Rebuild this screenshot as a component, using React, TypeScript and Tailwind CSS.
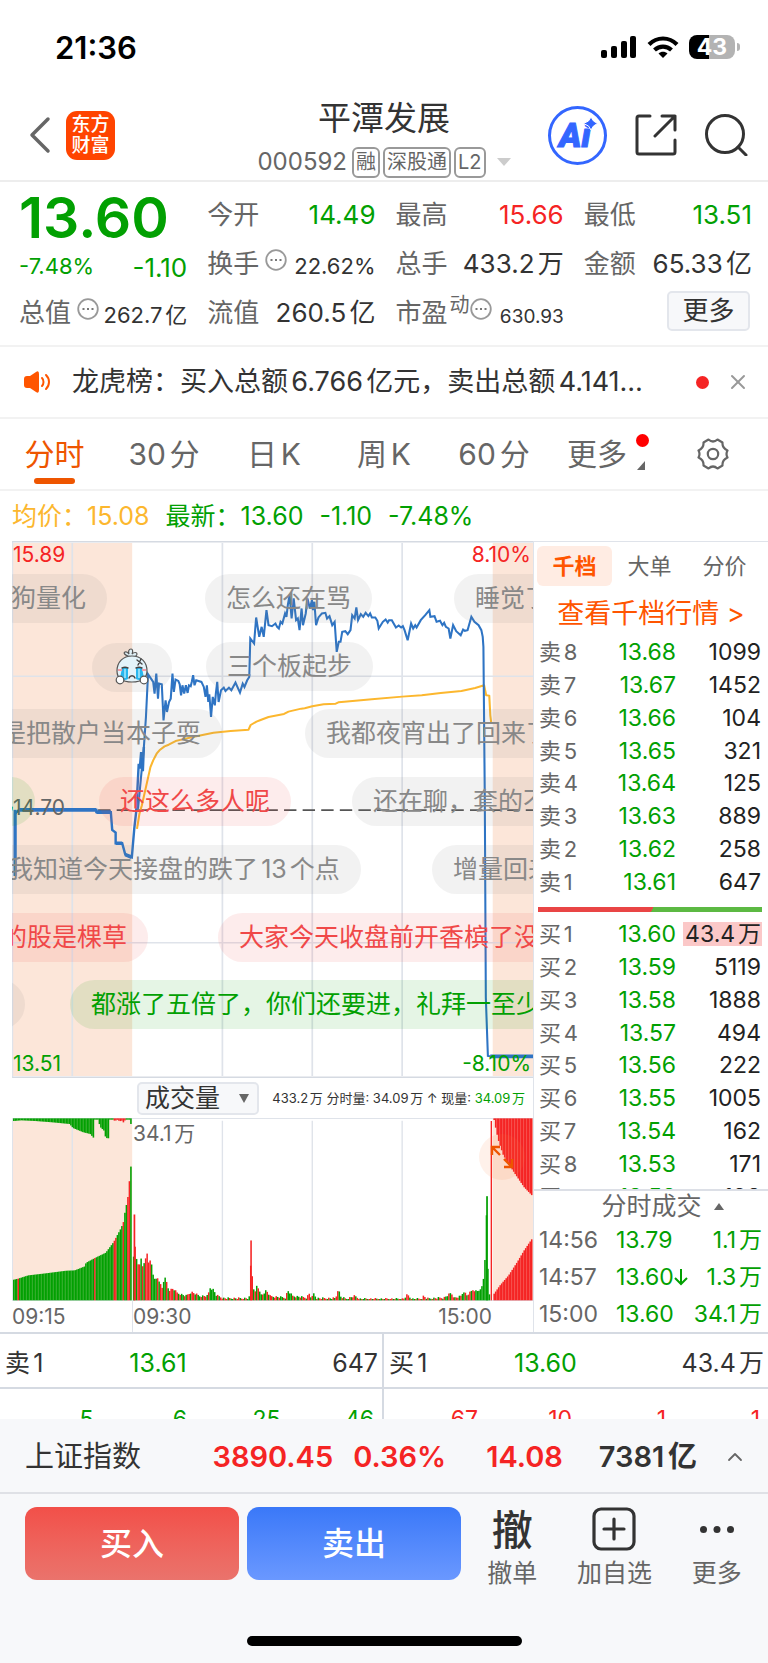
import type { ReactNode } from 'react'
import { ChevronUp, X } from 'lucide-react'
import clsx from 'clsx'

type Level = { name: string; price: string; qty: string; hot?: boolean }

const SELLS: Level[] = [
  { name: '卖8', price: '13.68', qty: '1099' },
  { name: '卖7', price: '13.67', qty: '1452' },
  { name: '卖6', price: '13.66', qty: '104' },
  { name: '卖5', price: '13.65', qty: '321' },
  { name: '卖4', price: '13.64', qty: '125' },
  { name: '卖3', price: '13.63', qty: '889' },
  { name: '卖2', price: '13.62', qty: '258' },
  { name: '卖1', price: '13.61', qty: '647' },
]

const BUYS: Level[] = [
  { name: '买1', price: '13.60', qty: '43.4万', hot: true },
  { name: '买2', price: '13.59', qty: '5119' },
  { name: '买3', price: '13.58', qty: '1888' },
  { name: '买4', price: '13.57', qty: '494' },
  { name: '买5', price: '13.56', qty: '222' },
  { name: '买6', price: '13.55', qty: '1005' },
  { name: '买7', price: '13.54', qty: '162' },
  { name: '买8', price: '13.53', qty: '171' },
  { name: '买9', price: '13.52', qty: '198' },
]

const TRADES = [
  { time: '14:56', price: '13.79', qty: '1.1万' },
  { time: '14:57', price: '13.60', down: true, qty: '1.3万' },
  { time: '15:00', price: '13.60', qty: '34.1万' },
]

// bullet comments drifting over the chart, x is the pill's left edge
const COMMENTS = [
  { row: 0, x: -22, text: '狗量化', tone: 'gray' },
  { row: 0, x: 193, text: '怎么还在骂', tone: 'gray' },
  { row: 0, x: 442, text: '睡觉了', tone: 'gray' },
  { row: 1, x: 194, text: '三个板起步', tone: 'gray' },
  { row: 2, x: -32, text: '是把散户当本子耍', tone: 'gray' },
  { row: 2, x: 293, text: '我都夜宵出了回来了', tone: 'gray' },
  { row: 3, x: -94, text: '明天见', tone: 'green' },
  { row: 3, x: 87, text: '还这么多人呢', tone: 'red' },
  { row: 3, x: 340, text: '还在聊，套的不多', tone: 'gray' },
  { row: 4, x: -25, text: '我知道今天接盘的跌了13个点', tone: 'gray' },
  { row: 4, x: 420, text: '增量回来', tone: 'gray' },
  { row: 5, x: -31, text: '的股是棵草', tone: 'red' },
  { row: 5, x: 206, text: '大家今天收盘前开香槟了没', tone: 'red' },
  { row: 6, x: -104, text: '睡觉了', tone: 'gray' },
  { row: 6, x: 58, text: '都涨了五倍了，你们还要进，礼拜一至少', tone: 'green' },
]

const PRICE_LINE =
  'M401 835 418 650 424 560 430 432 445 455 449 490 454 430 459 505 462 460 470 462 475 570 481 510 485 545 491 515 496 505 501 430 505 485 510 448 518 452 522 462 526 495 530 465 535 490 540 465 545 488 549 465 554 468 557 455 561 435 565 465 570 450 585 455 592 470 597 500 601 465 605 515 608 492 613 560 618 500 624 525 627 490 631 455 635 515 642 480 650 472 655 482 665 472 672 480 684 457 697 487 705 460 710 470 718 450 724 440 727 325 738 340 744 262 753 320 760 290 766 320 774 240 780 285 790 288 800 280 805 290 810 295 815 275 820 280 828 250 832 260 836 225 841 195 847 265 853 205 860 270 865 265 870 300 876 235 880 285 888 250 893 205 900 235 906 210 909 240 913 215 918 285 925 262 935 250 945 248 950 265 957 258 965 285 972 275 978 365 984 335 989 335 994 305 1003 303 1010 312 1018 300 1023 255 1030 265 1035 232 1040 270 1048 252 1055 260 1062 248 1070 258 1075 250 1080 262 1090 262 1096 272 1100 295 1112 275 1120 268 1126 277 1130 270 1138 270 1150 292 1158 286 1165 292 1170 288 1175 300 1184 330 1194 280 1200 295 1206 285 1210 292 1222 270 1235 255 1247 240 1250 260 1262 258 1268 275 1278 272 1285 285 1290 278 1295 290 1303 295 1308 325 1316 285 1325 303 1338 315 1345 298 1350 302 1358 300 1369 260 1378 275 1390 285 1398 300 1402 320 1404 350 1408 800 1411 1400 1417 1575 1425 1576'

const AVG_LINE =
  'M398 895 405 850 412 825 424 770 437 710 445 690 455 670 465 658 478 648 490 643 510 632 530 627 560 620 620 607 670 602 722 598 728 584 745 574 757 569 780 560 825 551 838 544 850 541 875 535 885 534 907 528 940 522 975 520 983 516 1000 514 1080 507 1168 499 1225 495 1280 488 1340 482 1380 473 1406 465 1412 495 1421 496 1424 555 1427 580'

const RED = '#f52424'
const GREEN = '#02a002'

type Pt = [number, number]

function envelope(points: Pt[], x: number) {
  for (let i = 1; i < points.length; i++) {
    const [x0, y0] = points[i - 1]
    const [x1, y1] = points[i]
    if (x <= x1) return y0 + ((y1 - y0) * (x - x0)) / (x1 - x0)
  }
  return points[points.length - 1][1]
}

// auction volume before the open
const AUCTION: Pt[] = [[38, 628], [50, 625], [80, 615], [130, 609], [190, 601], [215, 600], [244, 588], [248, 577], [275, 562], [305, 547], [328, 515], [350, 472], [358, 450], [362, 415], [368, 392], [372, 355], [377, 288], [382, 288]]
const AUCTION_REST: Pt[] = [[38, 151], [60, 149], [100, 151], [150, 155], [200, 160], [210, 172], [240, 185], [260, 190], [270, 202], [272, 203], [273, 147], [284, 147], [288, 168], [300, 180], [305, 202], [313, 203], [314, 147], [328, 147], [331, 151], [340, 147], [345, 152], [352, 150], [357, 156], [362, 147], [374, 147], [376, 160], [382, 160]]
const CLOSE_TOP: Pt[] = [[1433, 148], [1440, 185], [1447, 215], [1460, 255], [1475, 280], [1495, 312], [1520, 350], [1545, 377]]
const CLOSE_BOTTOM: Pt[] = [[1433, 670], [1450, 645], [1475, 615], [1500, 575], [1520, 540], [1545, 502]]

const SESSION: Pt[] = [[387, 622], [390, 432], [393, 555], [400, 575], [404, 600], [408, 550], [413, 590], [420, 575], [427, 548], [433, 585], [438, 560], [443, 608], [450, 628], [457, 622], [465, 640], [472, 655], [478, 617], [484, 635], [490, 660], [503, 655], [515, 668], [540, 677], [556, 665], [580, 677], [604, 677], [609, 652], [620, 658], [628, 675], [650, 684], [722, 684], [727, 675], [729, 510], [733, 635], [740, 670], [747, 640], [753, 665], [760, 675], [773, 660], [785, 678], [830, 682], [835, 660], [850, 677], [890, 682], [898, 670], [905, 684], [912, 668], [918, 684], [975, 684], [982, 655], [990, 680], [1005, 686], [1030, 677], [1045, 686], [1172, 686], [1183, 673], [1195, 686], [1225, 686], [1230, 677], [1240, 685], [1290, 682], [1310, 668], [1320, 683], [1338, 678], [1347, 663], [1356, 675], [1374, 658], [1385, 663], [1398, 655], [1405, 620], [1410, 541], [1414, 377], [1418, 672]]

const GREEN_BARS = [0, 2, 5, 7, 12, 13, 14, 15, 17, 20, 21, 23, 51, 52, 53, 80, 84, 103, 104, 105, 137, 138]

function bars(from: number, to: number, step = 4.36) {
  const xs: number[] = []
  for (let x = from; x < to; x += step) xs.push(x)
  return xs
}

function VolumeChart() {
  return (
    <svg viewBox="35 142 1513 550" preserveAspectRatio="none" className="block h-[183px] w-full" aria-hidden="true">
      <rect x="38" y="142" width="346" height="550" fill="#fce6d9" />
      <rect x="1431" y="142" width="117" height="550" fill="#fce6d9" />
      <path d="M210 142V692M646 150V692M907 150V692M1168 150V692" stroke="#dfe3ea" strokeWidth="4" />
      <path d="M35 143.500H1548M35 690.500H1548M36.500 142V692" stroke="#dfe3ea" strokeWidth="3" />
      {bars(38, 380).map((x, i) => {
        const red = (x > 48 && x < 53) || (x > 270 && x < 275) || (x > 326 && x < 338) || (x > 352 && x < 357) || (x > 369 && x < 375)
        const topRed = x > 327 && x < 362
        return (
          <g key={i}>
            <rect x={x} y={envelope(AUCTION, x)} width="4.6" height={690 - envelope(AUCTION, x)} fill={red ? RED : GREEN} />
            <rect x={x} y="143" width="4.6" height={envelope(AUCTION_REST, x) - 143} fill={topRed ? RED : GREEN} />
          </g>
        )
      })}
      {bars(386, 1420).map((x, i) => {
        const base = envelope(SESSION, x + 2)
        const wobble = base > 640 && x < 1390 ? ((i * 37) % 7) - 3 : 0
        const y = Math.min(686, base + wobble)
        const green = x > 1372 ? x > 1376 : GREEN_BARS.includes(i) || (i > 24 && (i * 29) % 11 < 5 && i !== 79)
        return <rect key={i} x={x} y={y} width="4.4" height={690 - y} fill={green ? GREEN : RED} />
      })}
      <rect x="388" y="432" width="5" height="258" fill={RED} />
      <rect x="727" y="510" width="4.500" height="180" fill={RED} />
      <rect x="1412" y="377" width="5" height="313" fill={GREEN} />
      <rect x="1425" y="151" width="4" height="539" fill={RED} />
      {bars(1433, 1543).map((x, i) => (
        <g key={i} fill={RED}>
          <rect x={x} y="143" width="4.500" height={envelope(CLOSE_TOP, x) - 143} />
          <rect x={x} y={envelope(CLOSE_BOTTOM, x)} width="4.500" height={690 - envelope(CLOSE_BOTTOM, x)} />
        </g>
      ))}
    </svg>
  )
}

function PriceChart() {
  return (
    <svg viewBox="35 33 1513 1608" preserveAspectRatio="none" className="block h-[537px] w-full" aria-hidden="true">
      <rect x="38" y="39" width="346" height="1596" fill="#fce6d9" />
      <rect x="1431" y="39" width="117" height="1596" fill="#fce6d9" />
      <path d="M210 39V1635M646 39V1635M907 39V1635M1168 39V1635" stroke="#dfe3ea" strokeWidth="5" />
      <path d="M36 438H1548M36 1236H1548M36 33V1641" stroke="#dfe3ea" strokeWidth="5" />
      <path d="M36 35H1548M36 1639H1548" stroke="#d5dae2" strokeWidth="5" />
      <path d="M285 839H1548" stroke="#555" strokeWidth="5" strokeDasharray="36 18" />
      <path d={AVG_LINE} fill="none" stroke="#fcb72e" strokeWidth="6" strokeLinejoin="round" />
      <path d="M44 1036V850L55 838H280V845H322L326 898 336 906V938H355L364 972 383 980 390 895 396 840 403 700 406 715 410 665 415 722 418 650" fill="none" stroke="#2e74c4" strokeWidth="7" />
      <path d="M55 838H280M280 845H322M336 938H355M364 972 383 980M1424 1576H1548" fill="none" stroke="#2e74c4" strokeWidth="11" />
      <path d="M44 838V1036" stroke="#2e74c4" strokeWidth="9" />
      <path d={PRICE_LINE} fill="none" stroke="#2e74c4" strokeWidth="6" />
    </svg>
  )
}

function CryingFace() {
  return (
    <svg viewBox="0 0 34 38" className="h-[38px] w-[34px]" aria-label="大哭" role="img">
      <g stroke="#555" strokeWidth="1.200">
        <path d="M13 9c-3-1-5-3-3-4s3 1 4 2c-1-3 0-5 2-5s2 3 1 5c2-2 5-2 5 0s-3 3-5 3z" fill="#dff0f7" />
        <path d="M17 9C8 9 2 15 2 24c0 7 5 11 15 11s15-4 15-11C32 15 26 9 17 9z" fill="#e3f3fa" />
      </g>
      <path d="M7 21h6v11c-3 2-6 1-8-1zM21 21h6l2 10c-2 2-5 3-8 1z" fill="#29b6ee" />
      <path d="M9 22h2v9H9zM23 22h2v9h-2z" fill="#8adcf8" />
      <path d="M7 21c2-1 4-1 6 0M21 21c2-1 4-1 6 0M14 31c1-3 5-3 6 0M22 13l5 4M26 12l-3 6" fill="none" stroke="#444" strokeWidth="1.400" strokeLinecap="round" />
      <path d="M3 23h4M27 23h4" stroke="#f59aa5" strokeWidth="2" />
      <g fill="#fff" stroke="#555" strokeWidth="1.200">
        <circle cx="5" cy="33" r="3.800" />
        <circle cx="29" cy="33" r="3.800" />
      </g>
    </svg>
  )
}

function StatusBar() {
  return (
    <div className="flex h-20 items-center justify-between pt-[14px] pr-[28px] pl-[55px]">
      <span className="text-[31px] font-semibold leading-none text-black">21:36</span>
      <div className="flex items-center gap-2.5">
        <svg viewBox="0 0 36 22" className="h-[22px] w-9" aria-hidden="true">
          <rect x="0" y="14" width="6" height="8" rx="2" />
          <rect x="10" y="10" width="6" height="12" rx="2" />
          <rect x="20" y="5" width="6" height="17" rx="2" />
          <rect x="29" y="0" width="6" height="22" rx="2" />
        </svg>
        <svg viewBox="0 0 32 23" className="h-[23px] w-8" fill="none" stroke="#000" strokeWidth="4.200" aria-hidden="true">
          <path d="M2 8.500C10 .5 22 .5 30 8.500" />
          <path d="M7.500 14C12.500 9.500 19.500 9.500 24.500 14" />
          <path d="M16 22l-4.500-4.500c2.500-2.200 6.500-2.200 9 0z" fill="#000" stroke="none" />
        </svg>
        <div className="flex items-center">
          <span className="flex h-6 w-[46px] items-center justify-center rounded-lg bg-[linear-gradient(90deg,#000_43%,#b3b3b3_43%)] text-[23px] font-bold leading-none text-white">43</span>
          <span className="ml-0.5 h-2 w-[3px] rounded-r-full bg-[#b3b3b3]" />
        </div>
      </div>
    </div>
  )
}

function Header() {
  return (
    <header className="grid h-[102px] grid-cols-[1fr_auto_1fr] items-center border-b-2 border-[#ededed] px-5">
      <div className="flex items-center gap-[14px] pt-2.5 pl-2">
        <button aria-label="返回" className="h-[38px] w-6">
          <svg viewBox="0 0 24 38" fill="none" stroke="#666" strokeWidth="3.500" strokeLinecap="round" strokeLinejoin="round">
            <path d="M20 3 4 19l16 16" />
          </svg>
        </button>
        <div className="flex h-[49px] w-[49px] flex-col items-center justify-center rounded-[11px] bg-[#ff4400] text-[19px] font-medium leading-[21px] text-white">
          <span>东方</span>
          <span>财富</span>
        </div>
      </div>
      <div className="flex flex-col items-center pt-4">
        <h1 className="text-[33px] leading-10 text-[#333]">平潭发展</h1>
        <button className="mt-2 flex items-center gap-[3px] text-[#666]">
          <span className="mr-0.5 text-[24px] leading-8">000592</span>
          {['融', '深股通', 'L2'].map(tag => (
            <span key={tag} className="flex h-[31px] items-center rounded-md border-2 border-[#999] px-0.5 text-[20px] leading-none">{tag}</span>
          ))}
          <svg viewBox="0 0 14 8" className="ml-2 h-2 w-3.5" aria-hidden="true"><path d="M0 0h14L7 8z" fill="#ccc" /></svg>
        </button>
      </div>
      <div className="flex items-center justify-end gap-[28px] pt-2.5">
        <button aria-label="Ai" className="h-[59px] w-[59px]">
          <svg viewBox="0 0 59 59">
            <circle cx="29.500" cy="29.500" r="28" fill="none" stroke="#3366ff" strokeWidth="3" />
            <text x="11" y="41" fontFamily="Roboto, sans-serif" fontSize="34" fontWeight="900" fontStyle="italic" fill="#3366ff" stroke="#3366ff">Ai</text>
            <path d="M43 11l2.500 4 4 2.500-4 2.500-2.500 4-2.500-4-5-2.500 5-2.500z" fill="#3366ff" stroke="#fff" strokeWidth="1" />
          </svg>
        </button>
        <button aria-label="分享" className="h-[42px] w-[42px]">
          <svg viewBox="0 0 42 42" fill="none" stroke="#333" strokeWidth="3" strokeLinecap="round" strokeLinejoin="round">
            <path d="M15 2H4a2 2 0 0 0-2 2v34a2 2 0 0 0 2 2h34a2 2 0 0 0 2-2V26M27 2h13v14M40 2 20 22" />
          </svg>
        </button>
        <button aria-label="搜索" className="h-[42px] w-[43px]">
          <svg viewBox="0 0 43 42" fill="none" stroke="#333" strokeWidth="3" strokeLinecap="round">
            <circle cx="20" cy="20" r="18.500" />
            <path d="M33 33l8 8" />
          </svg>
        </button>
      </div>
    </header>
  )
}

function InfoDot() {
  return (
    <svg viewBox="0 0 22 22" className="mb-2 h-[22px] w-[22px] shrink-0" aria-hidden="true">
      <circle cx="11" cy="11" r="9.800" fill="none" stroke="#999" strokeWidth="1.800" />
      <path d="M5.500 11h2M10 11h2M14.500 11h2" stroke="#777" strokeWidth="2.200" />
    </svg>
  )
}

function Quote({ label, value, extra, className }: { label: string; value: string; extra?: ReactNode; className?: string }) {
  return (
    <div className="flex h-[49px] items-center whitespace-nowrap">
      <span className="text-[26px] leading-8 text-[#666]">{label}</span>
      {extra}
      <span className={clsx('ml-auto leading-8', className)}>{value}</span>
    </div>
  )
}

function QuotePanel() {
  return (
    <section className="grid grid-cols-4 gap-x-5 border-b-2 border-[#f2f2f2] pt-2 pr-4 pb-2 pl-[19px]">
      <div className="row-span-2 flex flex-col justify-between pb-1 whitespace-nowrap text-[#02a002]">
        <span className="text-[57px] font-semibold leading-[56px]">13.60</span>
        <span className="flex items-center justify-between leading-8">
          <span className="text-[22px]">-7.48%</span>
          <span className="pt-1 text-[26px]">-1.10</span>
        </span>
      </div>
      <Quote label="今开" value="14.49" className="text-[26px] text-[#02a002]" />
      <Quote label="最高" value="15.66" className="text-[26px] text-[#f52424]" />
      <Quote label="最低" value="13.51" className="text-[26px] text-[#02a002]" />
      <Quote label="换手" value="22.62%" extra={<span className="ml-1.5"><InfoDot /></span>} className="pt-1 text-[22px] text-[#333]" />
      <Quote label="总手" value="433.2万" className="text-[26px] text-[#333]" />
      <Quote label="金额" value="65.33亿" className="text-[26px] text-[#333]" />
      <Quote label="总值" value="262.7亿" extra={<span className="ml-1.5"><InfoDot /></span>} className="pt-1 text-[22px] text-[#333]" />
      <Quote label="流值" value="260.5亿" className="text-[26px] text-[#333]" />
      <Quote
        label="市盈"
        value="630.93"
        extra={<span className="flex items-center pl-0.5"><span className="mb-4 text-[20px] leading-6 text-[#666]">动</span><InfoDot /></span>}
        className="pt-2 text-[19px] text-[#333]"
      />
      <div className="flex items-center justify-end pr-0.5 pb-1">
        <button className="h-10 w-[83px] rounded-[5px] border-2 border-[#e3e6ec] bg-[#f7f8fa] text-[26px] leading-8 text-[#333]">更多</button>
      </div>
    </section>
  )
}

function NewsBar() {
  return (
    <div className="flex h-[72px] items-center border-b-2 border-[#f2f2f2] pr-[18px] pl-6">
      <svg viewBox="0 0 26 22" className="h-[22px] w-[26px] shrink-0" aria-hidden="true">
        <path d="M3 5h3l6-4q3-2 3 2v16q0 4-3 2l-6-4H3a3 3 0 0 1-3-3V8a3 3 0 0 1 3-3z" fill="#ff5500" />
        <path d="M18 7c2 2 2 6 0 8M22 4c4 4 4 10 0 14" fill="none" stroke="#ff5500" strokeWidth="2" strokeLinecap="round" />
      </svg>
      <a href="#lhb" className="ml-[22px] flex-1 truncate text-[27px] leading-9 text-[#333]">龙虎榜：买入总额6.766亿元，卖出总额4.141…</a>
      <span className="mr-[17px] ml-8 h-[13px] w-[13px] rounded-full bg-[#f52424]" />
      <button aria-label="关闭"><X size={24} strokeWidth={2} className="text-[#999]" /></button>
    </div>
  )
}

const TABS = ['30分', '日K', '周K', '60分']

function PeriodTabs() {
  return (
    <nav className="flex h-[72px] items-center border-b-2 border-[#f2f2f2] text-[30px] leading-10 text-[#666]">
      <button className="flex w-[109px] flex-col items-center pt-[9px] text-[#ee5500]">
        分时
        <span className="mt-1 h-1.5 w-[41px] rounded-sm bg-[#ee5500]" />
      </button>
      {TABS.map(tab => (
        <button key={tab} className="flex-1">{tab}</button>
      ))}
      <button className="relative w-[100px] pr-1">
        更多
        <span className="absolute top-0 right-0 h-[13px] w-[13px] rounded-full bg-[#f00]" />
        <svg viewBox="0 0 8 9" className="absolute right-1 bottom-1 h-[9px] w-2" aria-hidden="true"><path d="M8 0v9H0z" fill="#666" /></svg>
      </button>
      <button aria-label="设置" className="mr-[39px] ml-[48px] h-8 w-8">
        <svg viewBox="0 0 32 32" fill="none" stroke="#666" strokeWidth="2.200" strokeLinejoin="round">
          <path d="M11.500 1.500q4.500 4 9 0l5 3q-.5 5.500 5 8-2 3.500 0 7-5.500 2.500-5 8l-5 3q-4.500-4-9 0l-5-3q.5-5.500-5-8 2-3.500 0-7 5.500-2.500 5-8z" />
          <circle cx="16" cy="16" r="5.200" />
        </svg>
      </button>
    </nav>
  )
}

function ChartPane() {
  return (
    <div className="min-w-0 flex-1 pl-3">
      <div className="relative overflow-hidden">
        <PriceChart />
        <span className="absolute top-0.5 left-px text-[21px] leading-6 text-[#f52424]">15.89</span>
        <span className="absolute top-0.5 right-0.5 text-[21px] leading-6 text-[#f52424]">8.10%</span>
        <span className="absolute top-[255px] left-px text-[21px] leading-6 text-[#666]">14.70</span>
        <span className="absolute bottom-0.5 left-px text-[21px] leading-6 text-[#02a002]">13.51</span>
        <span className="absolute right-0.5 bottom-0.5 text-[21px] leading-6 text-[#02a002]">-8.10%</span>
        <span className="absolute top-[102px] left-20 h-[49px] w-20 rounded-full bg-[#808080]/10" />
        <span className="absolute top-[106px] left-[103px]"><CryingFace /></span>
        {COMMENTS.map(c => (
          <span
            key={`${c.row}-${c.x}`}
            className={clsx(
              'absolute h-[49px] rounded-full px-[21px] text-[25px] leading-[49px] whitespace-nowrap',
              c.tone === 'gray' && 'bg-[#808080]/10 text-[#888]',
              c.tone === 'red' && 'bg-[#f04848]/10 text-[#f04848]',
              c.tone === 'green' && 'bg-[#02a002]/10 text-[#02a002]'
            )}
            style={{ left: c.x, top: Math.round(33 + c.row * 67.7) }}
          >
            {c.text}
          </span>
        ))}
      </div>

      {/* Volume */}
      <div className="flex h-10 items-center justify-between pr-2 pl-[125px] whitespace-nowrap">
        <span className="relative">
          <select aria-label="指标" className="h-[33px] w-[122px] appearance-none rounded-[5px] border-2 border-[#e3e6ec] bg-[#f7f8fa] pl-1.5 text-[25px] leading-7 text-[#333]">
            <option>成交量</option>
          </select>
          <svg viewBox="0 0 10 9" className="pointer-events-none absolute top-3 right-[10px] h-[9px] w-2.5" aria-hidden="true"><path d="M0 0h10L5 9z" fill="#666" /></svg>
        </span>
        <span className="text-[13px] leading-5 text-[#333]">
          433.2万 分时量: 34.09万 ↑ 现量: <span className="text-[#02a002]">34.09万</span>
        </span>
      </div>
      <div className="relative">
        <VolumeChart />
        <span className="absolute top-1 left-[121px] text-[21px] leading-6 text-[#666]">34.1万</span>
        <button aria-label="全屏" className="absolute top-4 right-2 flex h-[46px] w-[46px] items-center justify-center rounded-full bg-[#ff7733]/10">
          <svg viewBox="0 0 24 24" className="h-6 w-6" fill="none" stroke="#ee5500" strokeWidth="2.400">
            <path d="M2 10V2h8M2 2l8 8M22 14v8h-8M22 22l-8-8" />
          </svg>
        </button>
      </div>
      <div className="flex h-[31px] items-center text-[21px] leading-6 text-[#666]">
        <span className="flex h-full w-[121px] items-center border-r border-[#dfe3ea]">09:15</span>
        <span>09:30</span>
        <span className="mr-[41px] ml-auto">15:00</span>
      </div>
    </div>
  )
}

function LevelTable({ rows, className, label }: { rows: Level[]; className: string; label: string }) {
  return (
    <table aria-label={label} className={clsx('w-full text-[23px] leading-6', className)}>
      <tbody>
        {rows.map(r => (
          <tr key={r.name}>
            <td className="w-16 py-0 pl-px text-[22px] text-[#666]">{r.name}</td>
            <td className="w-[74px] py-0 text-right text-[#02a002]">{r.price}</td>
            <td className="py-0 text-right text-[#222]">
              <span className={clsx('inline-block pr-px', r.hot && 'bg-[#fbc8c8] pl-0.5')}>{r.qty}</span>
            </td>
          </tr>
        ))}
      </tbody>
    </table>
  )
}

function OrderBook() {
  return (
    <aside className="flex w-[235px] shrink-0 flex-col border-t border-l border-[#dfe3ea]">
      <div className="flex h-[49px] items-center pr-1.5 pb-0.5 pl-[3px] text-[22px] leading-7 text-[#666]">
        <button className="h-10 w-[75px] rounded-md bg-[#ffece3] font-bold text-[#ff5500]">千档</button>
        <button className="h-10 flex-1">大单</button>
        <button className="h-10 flex-1">分价</button>
      </div>
      <a href="#levels" className="flex h-[45px] items-center justify-center text-[27px] leading-8 text-[#ff5500]">查看千档行情 &gt;</a>
      <div className="pr-1.5 pl-1">
        <LevelTable rows={SELLS} label="卖盘" className="h-[262px]" />
        <div className="mt-[9px] mb-1.5 h-[5px] bg-[linear-gradient(120deg,#e94545_51%,#5cb943_51%)]" />
        <div className="h-[271px] overflow-hidden">
          <LevelTable rows={BUYS} label="买盘" className="h-[295px]" />
        </div>
      </div>
      <div className="flex flex-1 flex-col border-t-2 border-[#dcdfe6] pr-1.5 pl-[5px]">
        <button className="flex items-center justify-center gap-3 pl-6 text-[25px] leading-[30px] text-[#666]">
          分时成交
          <svg viewBox="0 0 10 7" className="h-[7px] w-2.5" aria-hidden="true"><path d="M0 7h10L5 0z" fill="#666" /></svg>
        </button>
        <table aria-label="分时成交" className="w-full text-[23px] leading-6">
          <tbody>
            {TRADES.map(t => (
              <tr key={t.time} className="h-[37px] text-[#02a002]">
                <td className="w-[77px] py-0 text-[#666]">{t.time}</td>
                <td className="w-[75px] py-0">
                  <span className="flex items-center">
                    {t.price}
                    {t.down && (
                      <svg viewBox="0 0 14 18" className="h-[18px] w-3.5 shrink-0" fill="none" stroke="#02a002" strokeWidth="2" aria-label="下跌"><path d="M7 1v15M1 10l6 6 6-6" /></svg>
                    )}
                  </span>
                </td>
                <td className="py-0 text-right whitespace-nowrap">{t.qty}</td>
              </tr>
            ))}
          </tbody>
        </table>
      </div>
    </aside>
  )
}

function BestQuotes() {
  const best = [
    { name: '卖1', price: '13.61', qty: '647', queue: ['5', '6', '25', '46'], color: 'text-[#02a002]' },
    { name: '买1', price: '13.60', qty: '43.4万', queue: ['67', '10', '1', '1'], color: 'text-[#f52424]' },
  ]
  return (
    <section className="grid h-[87px] grid-cols-2 overflow-hidden border-t-2 border-[#d5dae2]">
      {best.map((b, i) => (
        <div key={b.name} className={clsx(i === 0 && 'border-r-2 border-[#d5dae2]')}>
          <div className="flex h-[55px] items-center border-b-2 border-[#d5dae2] pt-1 pr-1 pl-[5px] text-[25px] leading-8 text-[#333]">
            <span className="flex-1">{b.name}</span>
            <span className="flex-1 text-[#02a002]">{b.price}</span>
            <span className="flex-1 text-right">{b.qty}</span>
          </div>
          <div className={clsx('grid grid-cols-4 pt-3 pr-2 text-right text-[23px] leading-9', b.color)}>
            {b.queue.map((q, n) => <span key={n}>{q}</span>)}
          </div>
        </div>
      ))}
    </section>
  )
}

function Footer() {
  return (
    <footer className="bg-[#f7f8fa]">
      <div className="flex h-[75px] items-center border-b-2 border-[#dfe1e6] pt-0.5 pr-[21px] pl-[25px] text-[29px] font-semibold leading-9 whitespace-nowrap text-[#f52424]">
        <span className="font-normal text-[#333]">上证指数</span>
        <span className="ml-auto">3890.45</span>
        <span className="ml-5">0.36%</span>
        <span className="ml-10">14.08</span>
        <span className="ml-9 text-[#333]">7381亿</span>
        <button aria-label="展开" className="ml-[26px]"><ChevronUp size={24} strokeWidth={1.800} className="text-[#666]" /></button>
      </div>
      <div className="flex pt-[13px] pl-[25px]">
        <div className="flex gap-2">
          <button className="h-[73px] w-[214px] rounded-xl bg-linear-to-b from-[#f24f49] to-[#ea736c] text-[32px] font-medium text-white">买入</button>
          <button className="h-[73px] w-[214px] rounded-xl bg-linear-to-b from-[#3a78f8] to-[#6a98ff] text-[32px] font-medium text-white">卖出</button>
        </div>
        <div className="flex flex-1 text-[25px] leading-8 text-[#666]">
          <button className="flex flex-1 flex-col items-center">
            <span className="h-[50px] text-[41px] font-medium leading-[46px] text-[#333]">撤</span>
            撤单
          </button>
          <button className="flex flex-1 flex-col items-center gap-1.5">
            <svg viewBox="0 0 44 44" className="h-11 w-11" fill="none" stroke="#333" strokeWidth="3.200" strokeLinecap="round" aria-hidden="true">
              <rect x="2" y="2" width="40" height="40" rx="7" />
              <path d="M22 12v20M12 22h20" />
            </svg>
            加自选
          </button>
          <button className="flex flex-1 flex-col items-center gap-1.5">
            <svg viewBox="0 0 44 44" className="h-11 w-11" fill="#333" aria-hidden="true">
              <circle cx="8.500" cy="22.500" r="3.500" />
              <circle cx="22" cy="22.500" r="3.500" />
              <circle cx="35.500" cy="22.500" r="3.500" />
            </svg>
            更多
          </button>
        </div>
      </div>
      <div className="flex justify-center pt-[47px] pb-[17px]">
        <span className="h-2.5 w-[275px] rounded-full bg-black" />
      </div>
    </footer>
  )
}

export default function App() {
  return (
    <div className="min-h-screen w-full bg-[#f7f8fa] font-[Inter,'Noto_Sans_CJK_SC',sans-serif] [text-autospace:normal]">
      <div className="bg-white">
        <StatusBar />
        <Header />
        <QuotePanel />
        <NewsBar />
        <PeriodTabs />
        <div className="flex h-[50px] items-center gap-4 pl-3 text-[25px] leading-8 text-[#02a002]">
          <span className="text-[#fcb72e]">均价：15.08</span>
          <span>最新：13.60</span>
          <span>-1.10</span>
          <span>-7.48%</span>
        </div>
        <main className="flex">
          <ChartPane />
          <OrderBook />
        </main>
        <BestQuotes />
      </div>
      <Footer />
    </div>
  )
}
